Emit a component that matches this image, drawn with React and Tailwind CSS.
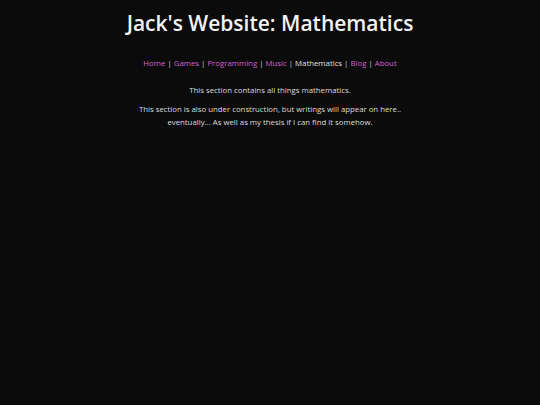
export default function App() {
  const links = ["Home", "Games", "Programming", "Music", "Mathematics", "Blog", "About"];
  return (
    <div className="min-h-[405px] bg-[#0b0b0b] text-[#e6e6e6] font-['Open_Sans',sans-serif] flex flex-col items-center">
      <h1 className="mt-[8px] text-[21px] font-semibold leading-[30px] text-[#f2f2f2]">Jack's Website: Mathematics</h1>
      <nav className="mt-[19px] text-[7.8px] leading-[12px] text-[#d0d0d0]">
        {links.map((l, i) => (
          <span key={l}>
            {l === "Mathematics" ? (
              <span className="text-[#e0e0e0]">{l}</span>
            ) : (
              <a className="text-[#d35fd3]">{l}</a>
            )}
            {i < links.length - 1 && <span> | </span>}
          </span>
        ))}
      </nav>
      <div className="mt-[15px] w-[280px] text-center text-[7.8px] leading-[13px] text-[#dcdcdc]">
        <p>This section contains all things mathematics.</p>
        <p className="mt-[6px]">This section is also under construction, but writings will appear on here.. eventually... As well as my thesis if I can find it somehow.</p>
      </div>
    </div>
  );
}
